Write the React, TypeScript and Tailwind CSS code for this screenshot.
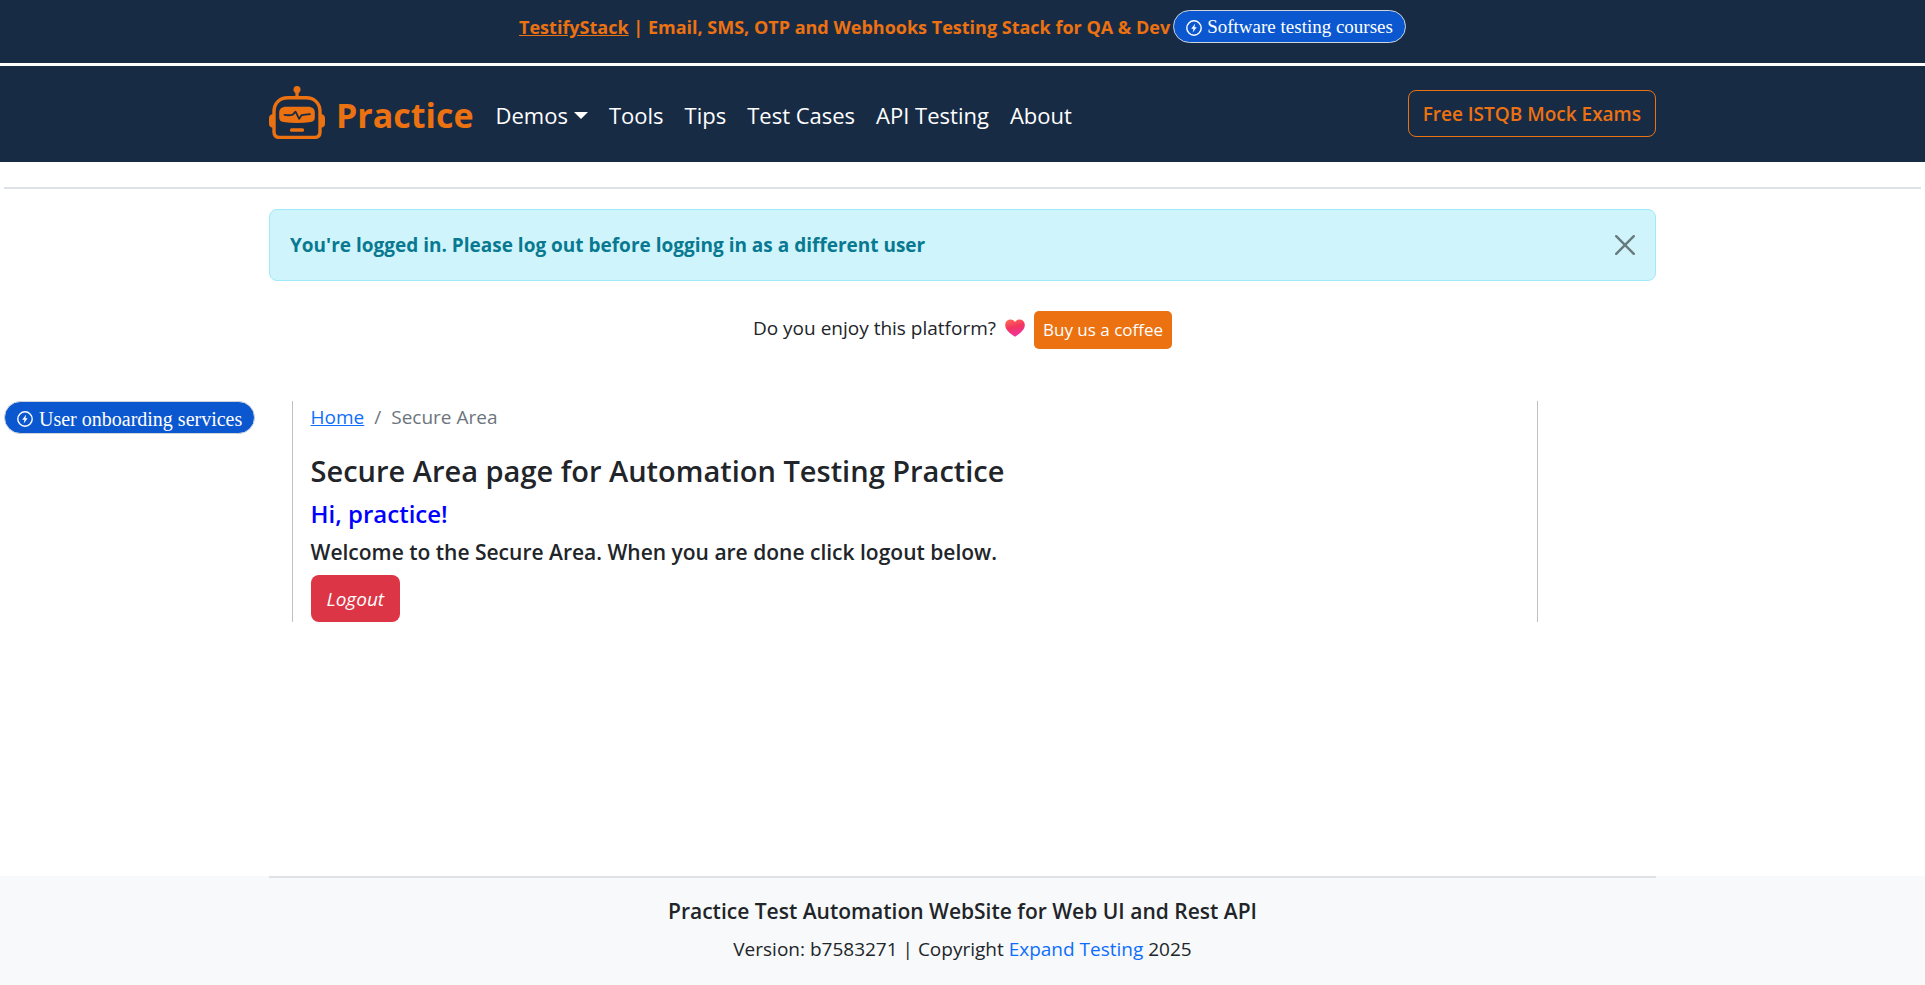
import React from "react";

function BoltCircle() {
  return (
    <svg viewBox="0 0 16 16" className="size-4 shrink-0" aria-hidden="true">
      <circle cx="8" cy="8" r="7.2" fill="none" stroke="currentColor" strokeWidth="1.4" />
      <path d="M9.2 3.6 5.2 8.7h2.3l-.8 3.7 4-5.1H8.4z" fill="currentColor" />
    </svg>
  );
}

function Pill({ large, children }: { large?: boolean; children: React.ReactNode }) {
  return (
    <a
      href="#"
      className={`inline-flex h-[33px] items-center whitespace-nowrap rounded-full border border-[#ced4da] bg-[#0b57d0] px-3 pt-0.5 font-['Liberation_Serif',serif] text-white ${large ? "gap-1.5 text-xl" : "gap-[5px] text-[19px]"}`}
    >
      <BoltCircle />
      {children}
    </a>
  );
}

function Robot() {
  return (
    <svg viewBox="0 0 56 53" className="h-[53px] w-14 shrink-0" aria-hidden="true">
      <circle cx="28" cy="3.6" r="3.5" fill="#ec7211" />
      <path d="M28 5v7" stroke="#ec7211" strokeWidth="3.2" />
      <path
        d="M19 11.8h18c8.500 0 14 5.500 14 14v20.200c0 3.600-1.800 5.400-5.400 5.400H10.400C6.800 51.400 5 49.600 5 46V25.800c0-8.500 5.500-14 14-14z"
        fill="none"
        stroke="#ec7211"
        strokeWidth="3.400"
      />
      <path d="M5 28C1.500 28 0 29.800 0 32v6c0 2.200 1.500 3.800 5 3.800zM51 28c3.500 0 5 1.800 5 4v6c0 2.200-1.500 3.800-5 3.800z" fill="#ec7211" />
      <path
        d="M17 20.700h22c4.500 0 6.800 2.300 6.800 6v4.800c0 2.600-1.400 4.100-4 4.500-9 1.200-18.600 1.200-27.600 0-2.600-.4-4-1.900-4-4.500v-4.800c0-3.700 2.300-6 6.800-6z"
        fill="#ec7211"
      />
      <path
        d="M15.500 28.800c3 .7 5.500.6 8.300-.1l2.700-3.100 3.700 7.200 2.500-3.700c2.700-.4 5.500-1 8.300-1"
        fill="none"
        stroke="#182b45"
        strokeWidth="1.800"
        strokeLinejoin="round"
        strokeLinecap="round"
      />
      <rect x="21" y="42.200" width="14" height="3.600" rx="1.500" fill="#ec7211" />
    </svg>
  );
}

function Heart() {
  return (
    <svg viewBox="0 0 20 18" className="h-[18px] w-5" role="img" aria-label="heart">
      <defs>
        <linearGradient id="heart" x1="0.3" y1="0" x2="0.6" y2="1">
          <stop offset="0" stopColor="#ff6357" />
          <stop offset="0.45" stopColor="#f2355f" />
          <stop offset="1" stopColor="#f032a8" />
        </linearGradient>
      </defs>
      <path d="M10 3C8.500 1 6.800.3 5 .6 2 1 .2 3.200.2 6c0 5 5 8.500 9.800 11.700C14.800 14.500 19.800 11 19.800 6c0-2.800-1.800-5-4.800-5.400C13.200.3 11.500 1 10 3z" fill="url(#heart)" />
    </svg>
  );
}

const links = ["Tools", "Tips", "Test Cases", "API Testing", "About"];

export default function App() {
  return (
    <div className="flex min-h-screen flex-col bg-white font-['Open_Sans',sans-serif] text-[19px] text-[#212529]">
      <div className="flex h-[63px] items-start justify-center gap-[3px] bg-[#182b45] pt-2.5">
        <p className="text-lg font-bold leading-[34px] text-[#ec7211]">
          <a href="#" className="underline">TestifyStack</a> | Email, SMS, OTP and Webhooks Testing Stack for QA &amp; Dev
        </p>
        <Pill>Software testing courses</Pill>
      </div>

      <header className="mt-[3px] bg-[#182b45]">
        <nav className="mx-auto flex h-24 w-full max-w-[1387px] items-center">
          <a href="#" className="flex h-[57px] items-start gap-[11px] text-[34px] font-bold leading-[58px] text-[#ec7211]">
            <Robot />
            Practice
          </a>
          <div className="ml-[22px] flex items-center gap-[21px] pt-0.5 text-[22px] leading-[34px] text-white">
            <button type="button" className="flex items-center gap-1.5">
              Demos
              <svg viewBox="0 0 14 7" className="h-[7px] w-3.5" aria-hidden="true">
                <path d="M0 0h14L7 7z" fill="currentColor" />
              </svg>
            </button>
            {links.map((l) => (
              <a key={l} href="#">{l}</a>
            ))}
          </div>
          <a href="#" className="mb-0.5 ml-auto flex h-[47px] items-center rounded-lg border border-[#ec7211] px-3.5 pt-0.5 font-semibold text-[#ec7211]">
            Free ISTQB Mock Exams
          </a>
        </nav>
      </header>

      <main className="flex-1 px-1">
        <hr className="mt-[25px] border-t-2 border-[#dee2e6]" />

        <div role="alert" className="mx-auto mt-5 flex h-[72px] w-full max-w-[1387px] items-center justify-between rounded-lg border border-[#9eeaf9] bg-[#cff4fc] px-5 text-[#087990]">
          <b className="font-bold">You're logged in. Please log out before logging in as a different user</b>
          <button type="button" aria-label="Close" className="text-black/50">
            <svg viewBox="0 0 20 20" className="size-5" aria-hidden="true">
              <path d="M1.200 1.200l17.600 17.600M18.800 1.200 1.200 18.800" stroke="currentColor" strokeWidth="2.400" strokeLinecap="round" />
            </svg>
          </button>
        </div>

        <div className="mt-[30px] flex h-[38px] items-start justify-center gap-[9px]">
          <span className="leading-[34px]">Do you enjoy this platform?</span>
          <span className="flex h-[34px] items-center">
            <Heart />
          </span>
          <a href="#" className="flex h-[38px] items-center rounded-[5px] bg-[#ec7211] px-[9px] text-[17px] text-white">Buy us a coffee</a>
        </div>

        <div className="mt-[52px] grid grid-cols-[15fr_65fr_20fr]">
          <aside className="flex items-start">
            <Pill large>User onboarding services</Pill>
          </aside>
          <section className="flex flex-col items-start border-x border-[#c0c0c0] px-[18px]">
            <nav aria-label="Breadcrumb" className="flex h-8 items-center gap-2.5 text-[#6c757d]">
              <a href="#" className="text-[#0d6efd] underline">Home</a>
              <span>/</span>
              <span>Secure Area</span>
            </nav>
            <h1 className="mt-[18px] text-[29px] font-semibold leading-10">Secure Area page for Automation Testing Practice</h1>
            <h2 className="mt-2 text-2xl font-semibold leading-[30px] text-[#0000ff]">Hi, practice!</h2>
            <h3 className="mt-2 text-[21px] font-semibold leading-[30px]">Welcome to the Secure Area. When you are done click logout below.</h3>
            <a href="#" className="mt-2 flex h-[47px] items-center rounded-lg bg-[#dc3545] px-4 pt-0.5 italic text-white">Logout</a>
          </section>
        </div>
      </main>

      <footer className="h-[109px] bg-[#f8f9fa] text-center">
        <div className="mx-auto w-full max-w-[1387px] border-t-2 border-[#dee2e6] pt-[18px]">
          <h2 className="text-[21px] font-semibold leading-[30px]">Practice Test Automation WebSite for Web UI and Rest API</h2>
          <p className="mt-2 leading-[30px]">
            Version: b7583271 | Copyright <a href="#" className="text-[#0d6efd]">Expand Testing</a> 2025
          </p>
        </div>
      </footer>
    </div>
  );
}
